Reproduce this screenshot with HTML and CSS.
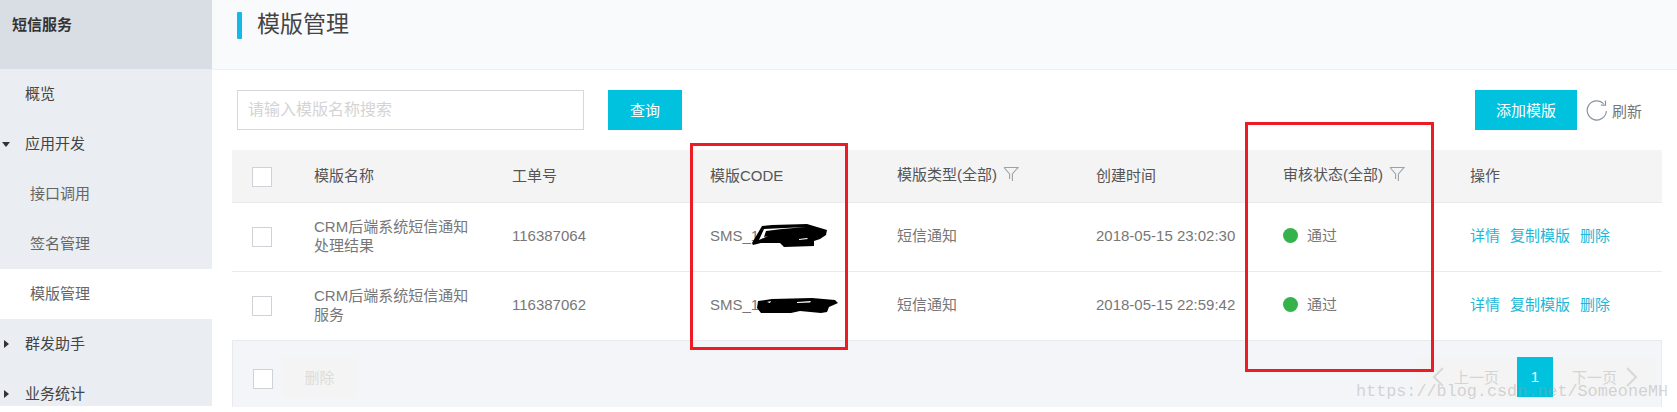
FILE: index.html
```html
<!DOCTYPE html>
<html lang="zh-CN">
<head>
<meta charset="utf-8">
<title>模版管理</title>
<link rel="stylesheet" href="styles.css">
</head>
<body>
<div class="app">
  <aside class="sidebar">
    <div class="side-head">短信服务</div>
    <nav class="side-nav">
      <a class="nav-item">概览</a>
      <a class="nav-item"><span class="tri tri-down"></span>应用开发</a>
      <a class="nav-item sub">接口调用</a>
      <a class="nav-item sub">签名管理</a>
      <a class="nav-item sub active">模版管理</a>
      <a class="nav-item"><span class="tri tri-right"></span>群发助手</a>
      <a class="nav-item"><span class="tri tri-right"></span>业务统计</a>
    </nav>
  </aside>
  <main class="main">
    <header class="page-head"><span class="accent"></span><h1>模版管理</h1></header>
    <div class="toolbar">
      <div class="search-input">请输入模版名称搜索</div>
      <button class="btn btn-search">查询</button>
      <div class="spacer"></div>
      <button class="btn btn-add">添加模版</button>
      <svg class="refresh-icon" width="22" height="22" viewBox="0 0 22 22" aria-hidden="true"><path d="M17.6 4.6A9.6 9.6 0 1 0 20.4 12" fill="none" stroke="#8a94a0" stroke-width="1.2"/><path d="M19.5 1.6V6.2H14.9" fill="none" stroke="#8a94a0" stroke-width="1.2"/></svg>
      <span class="refresh-text">刷新</span>
    </div>
    <table class="grid">
      <colgroup>
        <col class="c1"><col class="c2"><col class="c3"><col class="c4"><col class="c5"><col class="c6"><col class="c7"><col class="c8">
      </colgroup>
      <thead>
        <tr>
          <th><span class="check"></span></th>
          <th>模版名称</th>
          <th>工单号</th>
          <th>模版CODE</th>
          <th>模版类型(全部)<svg class="filter" width="16" height="16" viewBox="0 0 16 16" aria-hidden="true"><path d="M1 1.5H15L9.4 8V15M1 1.5L6.6 8V13" fill="none" stroke="#9aa3ab" stroke-width="1.1"/></svg></th>
          <th>创建时间</th>
          <th>审核状态(全部)<svg class="filter" width="16" height="16" viewBox="0 0 16 16" aria-hidden="true"><path d="M1 1.5H15L9.4 8V15M1 1.5L6.6 8V13" fill="none" stroke="#9aa3ab" stroke-width="1.1"/></svg></th>
          <th>操作</th>
        </tr>
      </thead>
      <tbody>
        <tr>
          <td><span class="check"></span></td>
          <td>CRM后端系统短信通知<br>处理结果</td>
          <td>116387064</td>
          <td>SMS_1</td>
          <td>短信通知</td>
          <td>2018-05-15 23:02:30</td>
          <td><span class="dot"></span>通过</td>
          <td class="ops"><a>详情</a><a>复制模版</a><a>删除</a></td>
        </tr>
        <tr>
          <td><span class="check"></span></td>
          <td>CRM后端系统短信通知<br>服务</td>
          <td>116387062</td>
          <td>SMS_1</td>
          <td>短信通知</td>
          <td>2018-05-15 22:59:42</td>
          <td><span class="dot"></span>通过</td>
          <td class="ops"><a>详情</a><a>复制模版</a><a>删除</a></td>
        </tr>
      </tbody>
    </table>
    <div class="table-foot">
      <span class="check"></span>
      <button class="btn-delete">删除</button>
      <div class="spacer"></div>
      <div class="pager">
        <svg width="12" height="20" viewBox="0 0 12 20" aria-hidden="true"><path d="M11 1L2 10L11 19" fill="none" stroke="#d9d9d9" stroke-width="2.2"/></svg>
        <span class="pg-text pg-prev">上一页</span>
        <span class="pg-num">1</span>
        <span class="pg-text pg-next">下一页</span>
        <svg width="12" height="20" viewBox="0 0 12 20" aria-hidden="true"><path d="M1 1L10 10L1 19" fill="none" stroke="#d9d9d9" stroke-width="2.2"/></svg>
      </div>
    </div>
  </main>
</div>
<svg class="scribble scribble-a" width="76" height="24" viewBox="0 0 76 24" aria-hidden="true"><path d="M0 19L10 2L20 1L55 0L75 6L74 11L68 15L62 17L62 22L32 23L28 19L9 19L1 21Z" fill="#000"/><path d="M7 16L12 5L54 3L30 5L14 7L12 13L24 10L16 12Z" fill="#fff"/><path d="M47 15L55 14L56 15L47 16Z" fill="#fff"/></svg>
<svg class="scribble scribble-b" width="81" height="15" viewBox="0 0 81 15" aria-hidden="true"><path d="M1 3L15 1L55 0L78 2L81 5L72 9L70 14L64 15L43 13L34 15L4 15L0 10Z" fill="#000"/><path d="M10 4L14 3L13 5ZM40 4L54 3L53 4.5L40 5Z" fill="#fff"/></svg>
<div class="mark mark-code"></div>
<div class="mark mark-status"></div>
<div class="watermark">https://blog.csdn.net/SomeoneMH</div>
</body>
</html>
```
FILE: styles.css
```css
* { box-sizing: border-box; }
html, body { margin: 0; padding: 0; background: #fff; height: 412px; overflow: hidden; }
body {
  font-family: "Liberation Sans", "Noto Sans CJK SC", sans-serif;
  font-size: 15px;
  color: #666;
  position: relative;
}
.app { display: flex; width: 1677px; height: 406px; }

.sidebar { width: 212px; flex: none; background: #eaedf1; overflow: hidden; }
.side-head {
  height: 69px;
  background: #d9dee4;
  padding: 15px 0 0 12px;
  font-weight: bold;
  color: #333;
  line-height: 20px;
}
.nav-item { display: block; position: relative; height: 50px; line-height: 50px; padding-left: 25px; color: #444; }
.nav-item.sub { padding-left: 30px; color: #666; }
.nav-item.active { background: #fff; }
.tri { position: absolute; width: 0; height: 0; border-style: solid; }
.tri-down { left: 2px; top: 23px; border-width: 5px 4.5px 0; border-color: #333 transparent transparent; }
.tri-right { left: 4px; top: 21px; border-width: 4.5px 0 4.5px 5px; border-color: transparent transparent transparent #333; }

.main { flex: 1; min-width: 0; display: flex; flex-direction: column; }
.page-head {
  height: 70px;
  flex: none;
  background: #f9fafc;
  border-bottom: 1px solid #eff1f3;
  display: flex;
  align-items: flex-start;
  padding: 12px 0 0 25px;
}
.accent { width: 5px; height: 27px; background: #14b9e8; border-radius: 1px; }
.page-head h1 { margin: -4px 0 0 15px; font-size: 23px; font-weight: normal; color: #444; line-height: 32px; }

.toolbar { display: flex; align-items: center; flex: none; height: 40px; margin-top: 20px; padding-left: 25px; }
.search-input {
  width: 347px;
  height: 40px;
  line-height: 38px;
  border: 1px solid #d5d8dc;
  padding-left: 10px;
  font-size: 16px;
  color: #d4d4d4;
}
.btn { border: 0; height: 40px; background: #00c1de; color: #fff; font: inherit; padding: 0 0 2px; }
.btn-search { width: 74px; margin-left: 24px; }
.spacer { flex: 1; }
.btn-add { width: 102px; }
.refresh-icon { margin-left: 9px; }
.refresh-text { margin: 0 35px 0 4px; color: #777; }

.grid { margin: 20px 0 0 20px; width: 1430px; table-layout: fixed; border-collapse: collapse; flex: none; }
.c1 { width: 65px; } .c2 { width: 198px; } .c3 { width: 198px; } .c4 { width: 187px; }
.c5 { width: 199px; } .c6 { width: 187px; } .c7 { width: 187px; } .c8 { width: 209px; }
.grid th {
  height: 52px;
  background: #f4f4f5;
  font-weight: normal;
  text-align: left;
  padding: 0 0 3px 17px;
  color: #555;
  border-bottom: 1px solid #e8eaed;
}
.grid td {
  height: 69px;
  padding: 0 0 2px 17px;
  line-height: 19px;
  color: #777;
  border-bottom: 1px solid #e8eaed;
}
.check { display: block; width: 20px; height: 20px; border: 1px solid #cfd2d6; background: #fff; margin-left: 3px; }
.grid th .check { margin-top: 5px; }
.grid td .check { margin-top: 2px; }
.filter { margin: 0 0 3px 6px; vertical-align: middle; position: relative; top: -1px; }
.dot { display: inline-block; width: 15px; height: 15px; border-radius: 50%; background: #35b34a; margin-right: 9px; vertical-align: -2px; }
.ops a { color: #1cb8d8; margin-right: 10px; }

.table-foot {
  margin-left: 20px;
  width: 1430px;
  height: 66px;
  flex: none;
  background: #f4f5f9;
  border-left: 1px solid #e8eaed;
  border-right: 1px solid #e8eaed;
  display: flex;
  align-items: flex-start;
  padding-top: 16px;
}
.table-foot .check { margin: 12px 0 0 20px; }
.btn-delete {
  width: 73px;
  height: 40px;
  margin-left: 10px;
  border: 0;
  background: #f4f4f4;
  color: #dcdcdc;
  font: inherit;
}
.pager {
  width: 241px;
  height: 40px;
  margin-right: 5px;
  background: #f4f4f4;
  display: flex;
  align-items: center;
  padding-left: 17px;
}
.pg-text { color: #d4d4d4; }
.pg-prev { margin-left: 10px; }
.pg-num { width: 36px; height: 40px; margin-left: 18px; background: #00c1de; color: #fff; text-align: center; line-height: 40px; }
.pg-next { margin: 0 9px 0 19px; }

.scribble { position: absolute; }
.scribble-a { left: 752px; top: 224px; }
.scribble-b { left: 757px; top: 298px; }
.mark { position: absolute; border: 3px solid #ed1c24; }
.mark-code { left: 690px; top: 143px; width: 158px; height: 207px; }
.mark-status { left: 1245px; top: 122px; width: 189px; height: 250px; }
.watermark {
  position: absolute;
  left: 1356px;
  top: 382px;
  font-family: "Liberation Mono", monospace;
  font-size: 16.8px;
  line-height: 20px;
  color: rgba(160, 160, 160, 0.42);
  white-space: nowrap;
}
```
